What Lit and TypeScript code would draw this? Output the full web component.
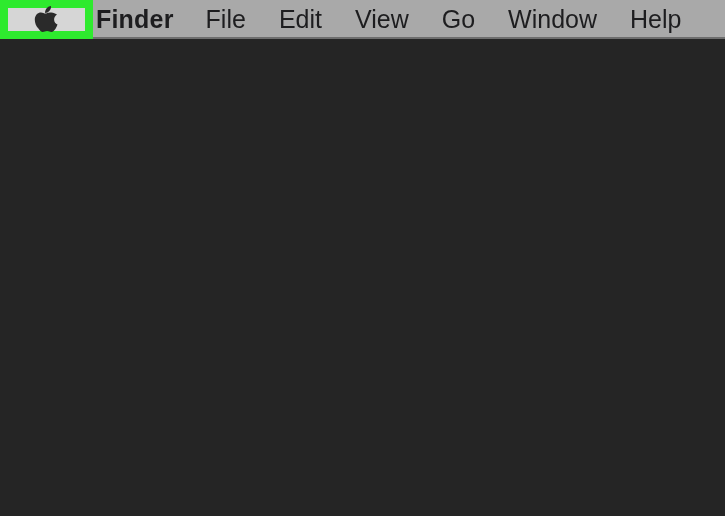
import { LitElement, html, css } from 'lit';
import { customElement } from 'lit/decorators.js';

const MENUS = ['File', 'Edit', 'View', 'Go', 'Window', 'Help'];

@customElement('app-root')
export class AppRoot extends LitElement {
  static styles = css`
    :host {
      display: block;
      width: 725px;
      height: 516px;
      background: #252525;
      overflow: hidden;
    }
    .bar {
      display: flex;
      align-items: stretch;
      height: 39px;
      box-sizing: border-box;
      background: #a9a9a9;
      border-bottom: 2px solid #6e6e6e;
      color: #1d1d1f;
      font-family: 'Liberation Sans', Arial, sans-serif;
      font-size: 25px;
      line-height: 39px;
      filter: blur(0.5px);
    }
    .apple {
      display: flex;
      align-items: center;
      justify-content: center;
      box-sizing: border-box;
      width: 93px;
      height: 39px;
      background: #d6d6d6;
      border: 8px solid #2eea2e;
      flex: none;
    }
    .apple svg {
      display: block;
      width: 24px;
      height: 27px;
      margin-top: -3px;
      margin-left: -2px;
    }
    .menus {
      display: flex;
      gap: 33px;
      padding-left: 3px;
    }
    .finder {
      font-weight: 700;
      letter-spacing: 0.2px;
    }
    .finder {
      margin-right: -1px;
    }
  `;

  render() {
    return html`
      <div class="bar">
        <div class="apple">
          <svg viewBox="0 0 24 27" aria-hidden="true">
            <path
              fill="#2a2a2a"
              d="M17 1c.2 2.2-.6 3.9-1.7 5.1-1.1 1.2-2.7 2-4.2 1.9-.2-2 .7-3.8 1.8-5C14 1.900 15.600 1.100 17 1zM23 9.500c-1.800 1.200-2.900 2.900-2.900 5 0 2.500 1.500 4.300 3.400 5.100-.5 1.500-1.200 3-2.100 4.300-1.100 1.500-2.200 3.100-4 3.100-1.700 0-2.300-1-4.300-1s-2.700 1-4.300 1c-1.800 0-3-1.600-4.200-3.300C2 21.500.8 17.800.8 14.800.8 10 3.900 7.500 7 7.500c1.800 0 3.200 1.100 4.300 1.100 1.100 0 2.700-1.200 4.800-1.200 1.100 0 4.300.1 6.900 2.100z"
            />
          </svg>
        </div>
        <div class="menus">
          <span class="finder">Finder</span>
          ${MENUS.map((m) => html`<span>${m}</span>`)}
        </div>
      </div>
    `;
  }
}
